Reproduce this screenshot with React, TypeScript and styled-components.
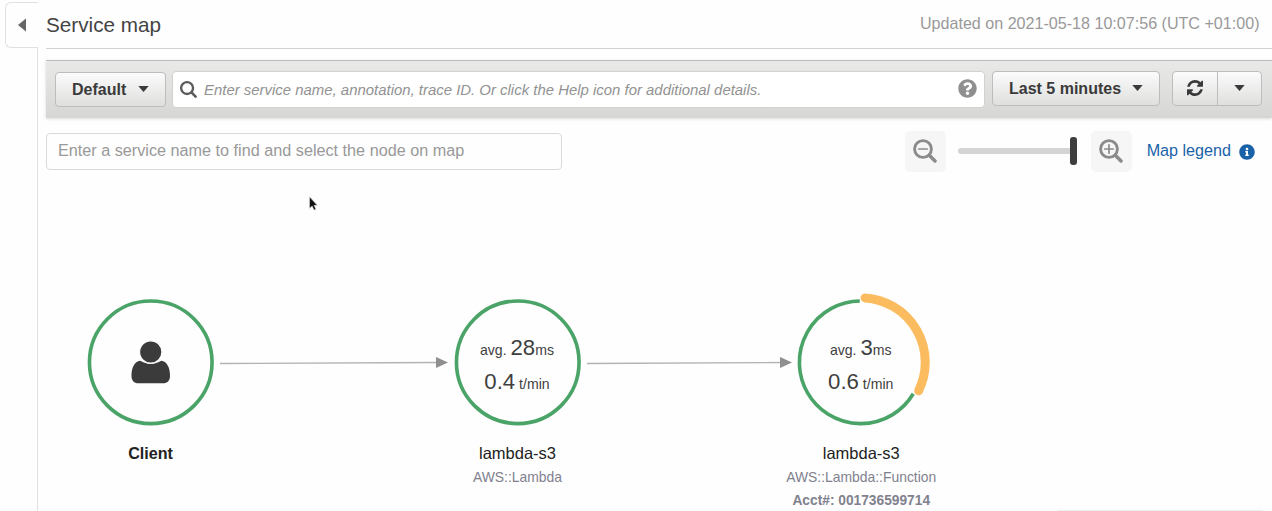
import React from "react";
import styled, { createGlobalStyle, css } from "styled-components";
import { FaInfoCircle, FaQuestionCircle } from "react-icons/fa";

const GlobalStyle = createGlobalStyle`
  *, *::before, *::after { box-sizing: border-box; }
  body {
    margin: 0;
    background: #fefefe;
    overflow: hidden;
    font-family: "Liberation Sans", Arial, Helvetica, sans-serif;
    color: #444;
  }
  svg { display: block; flex: none; }
`;

const Page = styled.div`
  display: grid;
  grid-template-columns: 38px 1fr;
  height: 511px;
`;

const Rail = styled.aside`
  display: flex;
  flex-direction: column;
  padding: 2px 0 0 5px;
`;

const RailTab = styled.button`
  display: flex;
  align-items: center;
  height: 46px;
  padding: 0 0 0 12px;
  background: transparent;
  border: 1px solid #e0e2e0;
  border-right: none;
  border-radius: 6px 0 0 6px;
`;

const RailEdge = styled.div`
  flex: 1;
  border-right: 1px solid #e2e2e2;
`;

const Main = styled.main`
  display: flex;
  flex-direction: column;
  min-width: 0;
  padding-left: 8px;
`;

const Header = styled.header`
  display: flex;
  justify-content: space-between;
  height: 49px;
  padding-right: 12.5px;
  border-bottom: 1px solid #d2d2d2;
`;

const Title = styled.h1`
  margin: 0;
  font-size: 20.7px;
  font-weight: 400;
  line-height: 50px;
  color: #444;
`;

const Updated = styled.span`
  font-size: 16.1px;
  line-height: 46px;
  color: #999;
`;

const Toolbar = styled.div`
  display: flex;
  align-items: flex-start;
  height: 58px;
  margin-top: 11px;
  padding: 10px 10px 0 9px;
  border-top: 1px solid #bcbcbc;
  background: linear-gradient(#e9e9e8, #d6d6d5);
  box-shadow: 0 1px 3px rgba(0, 0, 0, 0.14);
`;

const buttonFace = css`
  height: 35px;
  border: 1px solid #bdbdbd;
  border-radius: 4px;
  background: linear-gradient(#fbfbfb, #dfdfde);
`;

const MenuButton = styled.button<{ $width: number; $drop?: number }>`
  ${buttonFace}
  display: flex;
  align-items: center;
  justify-content: space-between;
  width: ${(p) => p.$width}px;
  margin-top: ${(p) => p.$drop ?? 0}px;
  padding: 0 16px;
  font: bold 16px "Liberation Sans", Arial, sans-serif;
  color: #3a3a3a;
`;

const SplitButton = styled.div`
  ${buttonFace}
  display: grid;
  grid-template-columns: 1fr 1fr;
  width: 90px;
  margin-left: 12px;
`;

const SplitPart = styled.button<{ $divided?: boolean }>`
  display: flex;
  align-items: center;
  justify-content: center;
  padding: 0 0 1px;
  background: none;
  border: none;
  border-left: ${(p) => (p.$divided ? "1px solid #bdbdbd" : "none")};
`;

const TraceSearch = styled.div`
  display: flex;
  align-items: center;
  flex: 1;
  height: 37px;
  margin: 0 7px 0 6px;
  padding: 0 7px 0 7px;
  background: #fff;
  border: 1px solid #d2d2d2;
  border-radius: 4px;
`;

const TraceHint = styled.span`
  flex: 1;
  margin-left: 7px;
  font-size: 14.93px;
  font-style: italic;
  white-space: nowrap;
  color: #929292;
`;

const HelpIcon = styled(FaQuestionCircle)`
  margin-bottom: 3px;
  color: #8f8f8f;
`;

const Controls = styled.div`
  display: flex;
  justify-content: space-between;
  height: 54px;
  padding: 12px 17px 0 0;
`;

const NodeSearch = styled.div`
  width: 516px;
  height: 37px;
  margin-top: 3px;
  padding-left: 11px;
  border: 1px solid #dadada;
  border-radius: 4px;
  font-size: 16.22px;
  line-height: 33px;
  color: #999;
`;

const ZoomGroup = styled.div`
  display: flex;
  align-items: center;
  height: 42px;
`;

const ZoomButton = styled.button`
  display: grid;
  place-items: center;
  width: 41px;
  height: 41px;
  padding: 0;
  border: none;
  border-radius: 5px;
  background: #f6f6f6;
`;

const Slider = styled.div`
  display: flex;
  align-items: center;
  width: 119px;
  margin: 0 14px 0 12px;
`;

const Track = styled.div`
  flex: 1;
  height: 6px;
  border-radius: 3px 0 0 3px;
  background: #d4d4d4;
`;

const Thumb = styled.div`
  width: 7px;
  height: 28px;
  border-radius: 3px;
  background: #3d3d3d;
`;

const Legend = styled.a`
  display: flex;
  align-items: center;
  gap: 8px;
  margin-left: 15px;
  padding-bottom: 1px;
  font-size: 16.15px;
  color: #1a62a8;
  > svg { margin-top: 2px; }
`;

const Canvas = styled.section`
  position: relative;
  flex: 1;
  margin-left: -46px;
`;

const Edges = styled.svg`
  position: absolute;
  inset: 0;
`;

const NodeBox = styled.div<{ $x: number }>`
  position: absolute;
  left: ${(p) => p.$x - 100}px;
  top: 118px;
  width: 200px;
  display: flex;
  flex-direction: column;
  align-items: center;
`;

const Dial = styled.div`
  display: grid;
  width: 144px;
  height: 144px;
  > * { grid-area: 1 / 1; }
`;

const Stats = styled.div`
  display: flex;
  flex-direction: column;
  align-items: center;
  padding: 41px 1px 0 0;
  font-size: 14.1px;
  line-height: 34px;
  color: #3f3f3f;
  white-space: nowrap;
`;

const Rate = styled.div`
  margin-top: -2px;
`;

const Figure = styled.span`
  font-size: 22.2px;
`;

const NodeName = styled.div<{ $bold?: boolean }>`
  margin-top: 8px;
  font-size: ${(p) => (p.$bold ? 16.1 : 16.5)}px;
  font-weight: ${(p) => (p.$bold ? 700 : 400)};
  line-height: 22px;
  color: #222;
`;

const NodeKind = styled.div<{ $bold?: boolean }>`
  font-size: ${(p) => (p.$bold ? 13.75 : 13.9)}px;
  font-weight: ${(p) => (p.$bold ? 700 : 400)};
  line-height: 23px;
  color: #81818e;
  white-space: nowrap;
  &:nth-child(3) { margin-top: 2px; }
`;

const Pointer = styled.svg`
  position: absolute;
  left: 308px;
  top: 24px;
`;

const Panel = styled.div`
  position: absolute;
  left: 1058px;
  right: 9px;
  bottom: 0;
  height: 1px;
  background: #efefef;
`;

const Caret = () => (
  <svg width="11" height="9" viewBox="0 0 11 9">
    <path d="M.3 1h10.400L5.500 7z" fill="#3a3a3a" />
  </svg>
);

const Magnifier = ({ size, color, sign }: { size: number; color: string; sign?: "+" | "-" }) => (
  <svg width={size} height={size} viewBox="0 0 24 24" fill="none" stroke={color} strokeLinecap="round">
    <circle cx="10" cy="10" r="8.400" strokeWidth={sign ? 2.9 : 3.3} />
    <path d="M16.500 16.500l5.500 5.500" strokeWidth={sign ? 3.5 : 3.7} />
    {sign && <path d="M5.800 10h8.400" strokeWidth="1.700" />}
    {sign === "+" && <path d="M10 5.800v8.400" strokeWidth="1.700" />}
  </svg>
);

const RefreshIcon = () => (
  <svg width="16" height="16" viewBox="0 0 1536 1536" fill="#3a3a3a">
    <path d="M1511 928q0 5-1 7-64 268-268 434.500t-478 166.500q-146 0-282.500-55t-243.500-157l-129 129q-19 19-45 19t-45-19-19-45v-448q0-26 19-45t45-19h448q26 0 45 19t19 45-19 45l-137 137q71 66 161 102t187 36q134 0 250-65t186-179q11-17 53-117 8-23 30-23h192q13 0 22.500 9.500t9.500 22.500zm25-800v448q0 26-19 45t-45 19h-448q-26 0-45-19t-19-45 19-45l138-138q-148-137-349-137-134 0-250 65t-186 179q-11 17-53 117-8 23-30 23h-199q-13 0-22.500-9.500t-9.500-22.500v-7q65-268 270-434.500t480-166.500q146 0 284 55.500t245 156.500l130-129q19-19 45-19t45 19 19 45z" />
  </svg>
);

const Ring = ({ faulted, person }: { faulted?: boolean; person?: boolean }) => (
  <svg width="144" height="144" viewBox="-71.750 -72.300 144 144" fill="none">
    {faulted ? (
      <>
        <path d="M52.500 31.500A61.300 61.300 0 1 1-1-61.300" stroke="#4aa367" strokeWidth="3.600" />
        <path d="M4.300-64.400A64.500 64.500 0 0 1 57.900 28.400" stroke="#fbbc60" strokeWidth="9" strokeLinecap="round" />
      </>
    ) : (
      <circle r="61.300" stroke="#4aa367" strokeWidth="3.600" />
    )}
    {person && (
      <g fill="#3b3b3b">
        <path d="M-10.500-1.500C-16.500-1-19.300 6-19.300 13.500C-19.300 18.500-16.500 21-12.500 21H12.500C16.500 21 19.300 18.500 19.300 13.500C19.300 6 16.500-1 10.500-1.500C4.500 2.600-4.500 2.600-10.500-1.500Z" />
        <circle cy="-10.300" r="11.200" stroke="#fefefe" strokeWidth="1.200" />
      </g>
    )}
  </svg>
);

type MapNode = {
  x: number;
  name: string;
  client?: boolean;
  faulted?: boolean;
  latency?: string;
  rate?: string;
  kind?: string;
  account?: string;
};

const nodes: MapNode[] = [
  { x: 150.5, name: "Client", client: true },
  { x: 517.5, name: "lambda-s3", latency: "28", rate: "0.4", kind: "AWS::Lambda" },
  {
    x: 861.25,
    name: "lambda-s3",
    faulted: true,
    latency: "3",
    rate: "0.6",
    kind: "AWS::Lambda::Function",
    account: "Acct#: 001736599714",
  },
];

export default function App() {
  return (
    <>
      <GlobalStyle />
      <Page>
        <Rail>
          <RailTab aria-label="Expand navigation">
            <svg width="8" height="14" viewBox="0 0 8 14">
              <path d="M8 .5v13L0 7z" fill="#666" />
            </svg>
          </RailTab>
          <RailEdge />
        </Rail>
        <Main>
          <Header>
            <Title>Service map</Title>
            <Updated>Updated on 2021-05-18 10:07:56 (UTC +01:00)</Updated>
          </Header>
          <Toolbar>
            <MenuButton $width={111} $drop={1}>
              Default
              <Caret />
            </MenuButton>
            <TraceSearch>
              <Magnifier size={17} color="#5c5c5c" />
              <TraceHint>
                Enter service name, annotation, trace ID. Or click the Help icon for additional details.
              </TraceHint>
              <HelpIcon size={19} />
            </TraceSearch>
            <MenuButton $width={168}>
              Last 5 minutes
              <Caret />
            </MenuButton>
            <SplitButton>
              <SplitPart aria-label="Refresh">
                <RefreshIcon />
              </SplitPart>
              <SplitPart $divided aria-label="Refresh options">
                <Caret />
              </SplitPart>
            </SplitButton>
          </Toolbar>
          <Controls>
            <NodeSearch>Enter a service name to find and select the node on map</NodeSearch>
            <ZoomGroup>
              <ZoomButton aria-label="Zoom out">
                <Magnifier size={24} color="#8b8b8b" sign="-" />
              </ZoomButton>
              <Slider>
                <Track />
                <Thumb />
              </Slider>
              <ZoomButton aria-label="Zoom in">
                <Magnifier size={24} color="#8b8b8b" sign="+" />
              </ZoomButton>
              <Legend>
                Map legend
                <FaInfoCircle size={16} />
              </Legend>
            </ZoomGroup>
          </Controls>
          <Canvas>
            <Edges width="1272" height="339">
              <g stroke="#b2b2b2" strokeWidth="1.400">
                <path d="M220 191.500L437 190.500" />
                <path d="M587 191.500L781 190.500" />
              </g>
              <path d="M436 185l12 5.500-12 5.500zM780 185l12 5.500-12 5.500z" fill="#8f8f8f" />
            </Edges>
            {nodes.map((node) => (
              <NodeBox key={node.x} $x={node.x}>
                <Dial>
                  <Ring faulted={node.faulted} person={node.client} />
                  {node.latency && (
                    <Stats>
                      <div>
                        avg. <Figure>{node.latency}</Figure>ms
                      </div>
                      <Rate>
                        <Figure>{node.rate}</Figure> t/min
                      </Rate>
                    </Stats>
                  )}
                </Dial>
                <NodeName $bold={node.client}>{node.name}</NodeName>
                {node.kind && <NodeKind>{node.kind}</NodeKind>}
                {node.account && <NodeKind $bold>{node.account}</NodeKind>}
              </NodeBox>
            ))}
            <Pointer width="12" height="16" viewBox="0 0 12 16">
              <path d="M1.500 .8v11.600l2.600-2.300 1.900 4 2-.9-1.900-3.900h3.300z" fill="#111" stroke="#ddd" strokeWidth=".6" />
            </Pointer>
            <Panel />
          </Canvas>
        </Main>
      </Page>
    </>
  );
}
